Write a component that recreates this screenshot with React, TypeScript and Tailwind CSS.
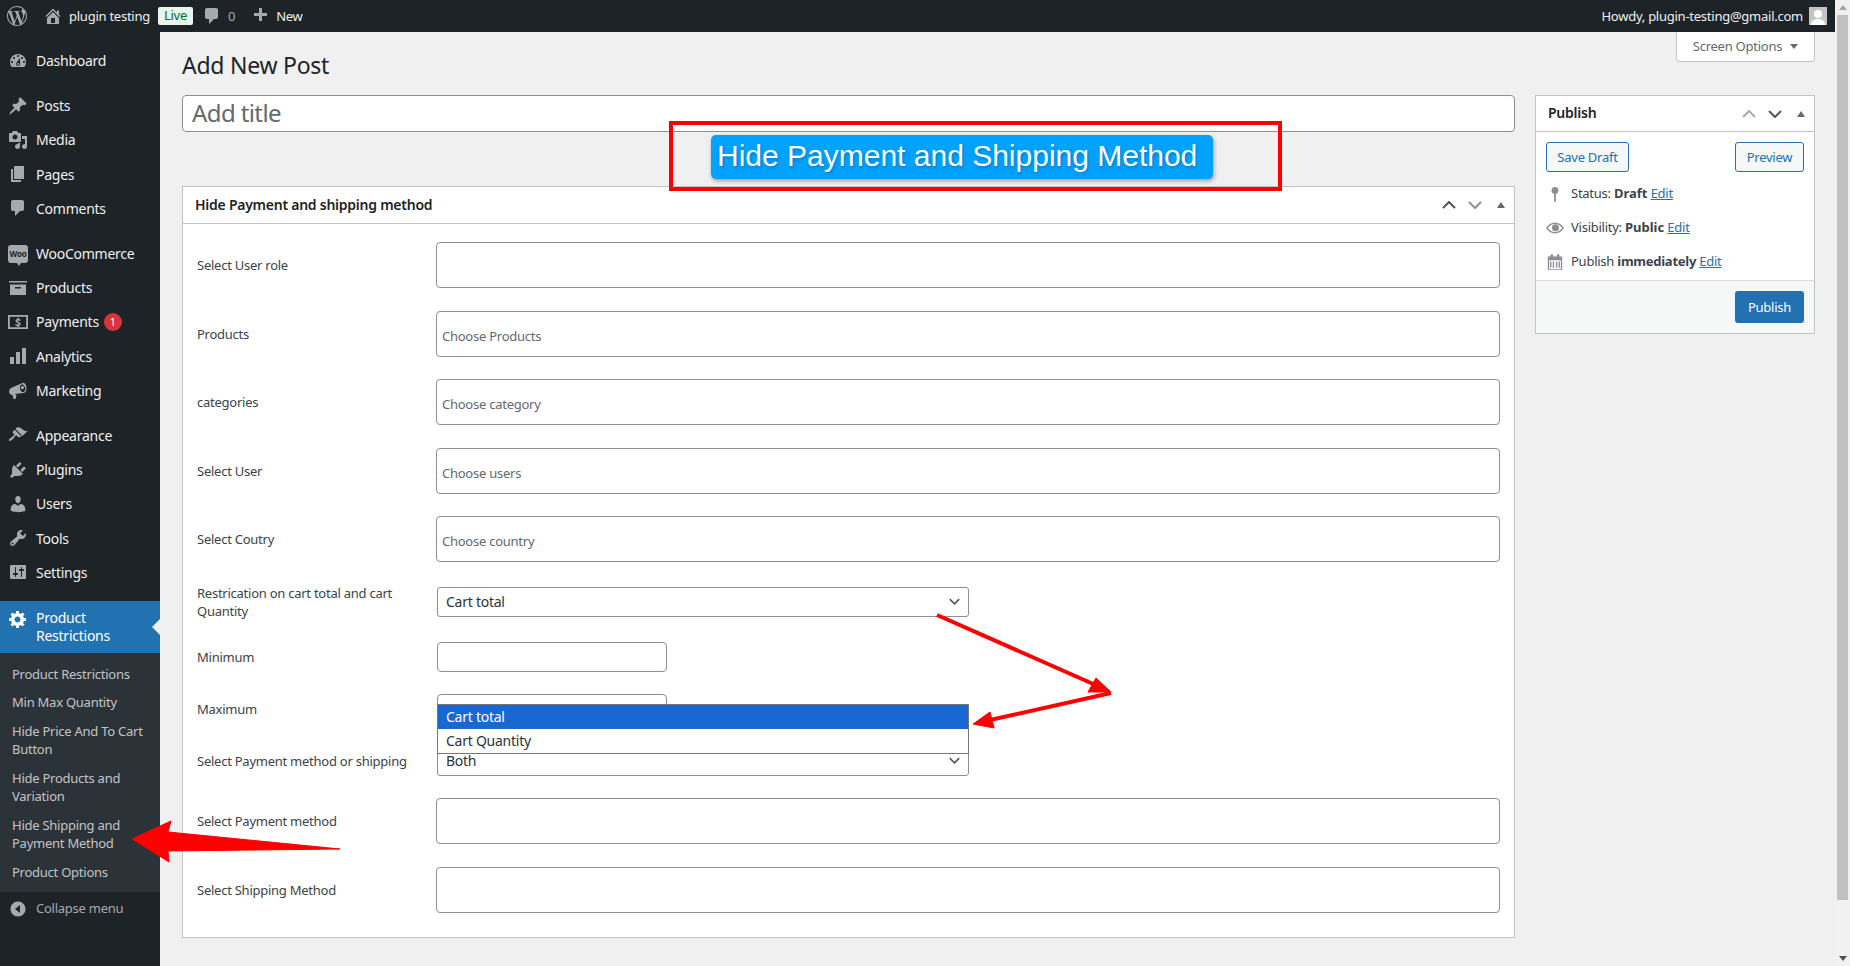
import { ReactNode } from 'react';
import { SiWordpress } from 'react-icons/si';

const FONT = "font-['Noto_Sans',sans-serif]";

const ICONS: Record<string, string> = {
  dashboard:
    'M3.76 16h12.48c1.1-1.37 1.76-3.11 1.76-5 0-4.42-3.58-8-8-8s-8 3.58-8 8c0 1.89.66 3.63 1.76 5zM10 4c.55 0 1 .45 1 1s-.45 1-1 1-1-.45-1-1 .45-1 1-1zM6 6c.55 0 1 .45 1 1s-.45 1-1 1-1-.45-1-1 .45-1 1-1zm8 0c.55 0 1 .45 1 1s-.45 1-1 1-1-.45-1-1 .45-1 1-1zm-5.37 5.55L12 7v6c0 1.1-.9 2-2 2s-2-.9-2-2c0-.57.24-1.08.63-1.45zM4 10c.55 0 1 .45 1 1s-.45 1-1 1-1-.45-1-1 .45-1 1-1zm12 0c.55 0 1 .45 1 1s-.45 1-1 1-1-.45-1-1 .45-1 1-1zm-5 3c0-.55-.45-1-1-1s-1 .45-1 1 .45 1 1 1 1-.45 1-1z',
  post: 'M10.44 3.02l1.82-1.82 6.36 6.35-1.83 1.82c-1.05-.68-2.48-.57-3.41.36l-.75.75c-.92.93-1.04 2.35-.35 3.41l-1.83 1.82-2.41-2.41-2.8 2.79c-.42.42-3.38 2.71-3.8 2.29s1.86-3.39 2.28-3.81l2.79-2.79L4.1 9.36l1.83-1.82c1.05.69 2.48.57 3.4-.36l.75-.75c.93-.92 1.05-2.35.36-3.41z',
  media:
    'M13 11V4c0-.55-.45-1-1-1h-1.67L9 1H5L3.67 3H2c-.55 0-1 .45-1 1v7c0 .55.45 1 1 1h10c.55 0 1-.45 1-1zM7 4.5c1.38 0 2.5 1.12 2.5 2.5S8.38 9.5 7 9.5 4.5 8.38 4.5 7 5.62 4.5 7 4.5zM14 6h5v10.5c0 1.38-1.12 2.5-2.5 2.5S14 17.88 14 16.5s1.12-2.5 2.5-2.5c.17 0 .34.02.5.05V9h-3V6zm-4 8.05V13h2v3.5c0 1.38-1.12 2.5-2.5 2.5S7 17.88 7 16.5 8.12 14 9.5 14c.17 0 .34.02.5.05z',
  page: 'M6 15V2h10v13H6zm-1 1h8v2H3V5h2v11z',
  comment:
    'M5 2h9c1.1 0 2 .9 2 2v7c0 1.1-.9 2-2 2h-2l-5 5v-5H5c-1.1 0-2-.9-2-2V4c0-1.1.9-2 2-2z',
  archive: 'M19 3v1.500H1V3h18zM2 6.500h16V17H2V6.500zM7 9v1.500h6V9H7z',
  analytics: 'M2 11h4v7H2zM8 6h4v12H8zM14 2h4v16h-4z',
  megaphone:
    'M18.15 5.94c.46 1.62.38 3.22-.02 4.48-.42 1.28-1.26 2.18-2.3 2.48-.16.06-.26.06-.4.06L7 14l1.5 1.5-1 3.5h-2l-1-4c-2.3 0-3.4-1.6-3.4-3.5 0-2.4 1.3-3.4 3.4-4.3L14.5 3c.2-.1.35-.14.6-.14 1.1-.04 2.5 1.1 3.05 3.08zM15.5 12c1.4-.4 2.1-2.4 1.6-4.4-.5-2-2-3.5-3.4-3.1-1.4.4-2.1 2.4-1.6 4.4.5 2 2 3.5 3.4 3.1zm-.7-2.8a1.6 1.6 0 1 0-.8-3.1 1.6 1.6 0 0 0 .8 3.1z',
  appearance:
    'M14.48 11.06L7.41 3.99l1.5-1.5c.5-.56 2.3-.47 3.51.32 1.21.8 1.43 1.28 2.91 2.1 1.18.64 2.45 1.26 4.45.85zm-.71.71L6.7 4.7 4.93 6.47c-.39.39-.39 1.02 0 1.41l1.06 1.06c.39.39.39 1.03 0 1.42-.6.6-1.43 1.11-2.21 1.69-.35.26-.7.53-1.01.84C1.43 13.23.4 14.96 1.15 15.71c.75.75 2.48-.28 3.82-1.62.31-.31.58-.66.84-1.01.58-.78 1.09-1.61 1.69-2.21.39-.39 1.02-.39 1.41 0l1.06 1.06c.39.39 1.02.39 1.41 0z',
  plugins:
    'M13.11 4.36L9.87 7.6 8 5.73l3.24-3.24c.35-.34 1.05-.2 1.56.32.52.51.66 1.21.31 1.55zm-8 1.77l.91-1.12 9.01 9.01-1.19.84c-.71.71-2.63 1.16-3.82 1.16H6.14L4.9 17.26c-.59.59-1.54.59-2.12 0-.59-.58-.59-1.53 0-2.12l1.24-1.24v-3.88c0-1.13.4-3.19 1.09-3.89zm7.26 3.97l3.24-3.24c.34-.35 1.04-.21 1.55.31.52.51.66 1.21.31 1.55l-3.24 3.25z',
  users:
    'M10 9.25c-2.27 0-2.73-3.44-2.73-3.44C7 4.02 7.82 2 9.97 2c2.16 0 2.98 2.02 2.71 3.81 0 0-.41 3.44-2.68 3.44zm0 2.57L12.72 10c2.39 0 4.52 2.33 4.52 4.53v2.49s-3.65 1.13-7.24 1.13c-3.65 0-7.24-1.13-7.24-1.13v-2.49c0-2.25 1.94-4.48 4.47-4.48z',
  tools:
    'M16.68 9.77c-1.34 1.34-3.3 1.67-4.95.99l-5.41 6.52c-.99.99-2.59.99-3.58 0s-.99-2.59 0-3.57l6.52-5.42c-.68-1.65-.35-3.61.99-4.95 1.28-1.28 3.12-1.62 4.72-1.06l-2.89 2.89 2.82 2.82 2.86-2.87c.53 1.58.18 3.39-1.08 4.65zM3.81 16.21c.4.39 1.04.39 1.43 0 .4-.4.4-1.04 0-1.43-.39-.4-1.03-.4-1.43 0-.39.39-.39 1.03 0 1.43z',
  settings:
    'M18 16V4c0-.55-.45-1-1-1H3c-.55 0-1 .45-1 1v12c0 .55.45 1 1 1h14c.55 0 1-.45 1-1zM8 11h1c.55 0 1 .45 1 1s-.45 1-1 1H8v1.5c0 .28-.22.5-.5.5s-.5-.22-.5-.5V13H6c-.55 0-1-.45-1-1s.45-1 1-1h1V5.5c0-.28.22-.5.5-.5s.5.22.5.5V11zm5-2h-1c-.55 0-1-.45-1-1s.45-1 1-1h1V5.5c0-.28.22-.5.5-.5s.5.22.5.5V7h1c.55 0 1 .45 1 1s-.45 1-1 1h-1v5.5c0 .28-.22.5-.5.5s-.5-.22-.5-.5V9z',
  gear: 'M18 12h-2.18c-.17.7-.44 1.35-.81 1.93l1.54 1.54-2.1 2.1-1.54-1.54c-.58.36-1.23.63-1.91.79V19H8v-2.18c-.68-.16-1.33-.43-1.91-.79l-1.54 1.54-2.12-2.12 1.54-1.54c-.36-.58-.63-1.23-.79-1.91H1V9.03h2.17c.16-.7.44-1.35.8-1.94L2.43 5.55l2.1-2.1 1.54 1.54c.58-.37 1.24-.64 1.93-.81V2h3v2.18c.68.16 1.33.43 1.91.79l1.54-1.54 2.12 2.12-1.54 1.54c.36.59.64 1.24.8 1.94H18V12zm-8.5 1.5c1.66 0 3-1.34 3-3s-1.34-3-3-3-3 1.34-3 3 1.34 3 3 3z',
  collapse:
    'M10 2.5c-4.14 0-7.5 3.36-7.5 7.5s3.36 7.5 7.5 7.5 7.5-3.36 7.5-7.5-3.36-7.5-7.5-7.5zM12 14l-5-4 5-4z',
  home: 'M16 8.5l1.53 1.53-1.06 1.06L10 4.62l-6.47 6.47-1.06-1.06L10 2.5l4 4v-2h2v4zm-6-2.46l6 5.99V18H4v-5.97zM12 17v-5H8v5h4z',
  plus: 'M17 7v3h-5v5H9v-5H4V7h5V2h3v5h5z',
  payments:
    'M0 3h20v14H0V3zm1.800 1.800v10.400h16.400V4.800H1.800zM10.800 5.800v1.100c.9.1 1.500.4 2 .8l-.8 1.400c-.6-.4-1.200-.7-1.900-.7-.6 0-.9.2-.9.5 0 .4.4.5 1.200.8 1.500.5 2.200 1.100 2.200 2.200 0 1-.7 1.700-1.800 2v1.100H9.300v-1c-.9-.1-1.800-.5-2.300-.9l.8-1.400c.6.500 1.400.8 2.100.8.600 0 1-.2 1-.6s-.4-.6-1.300-.9c-1.300-.5-2.100-1-2.100-2.200 0-1 .7-1.700 1.800-1.900V5.800h1.500z',
};

const Dashicon = ({ name, className }: { name: string; className: string }) => (
  <svg viewBox="0 0 20 20" fill="currentColor" fillRule="evenodd" className={className}>
    <path d={ICONS[name]} />
  </svg>
);

/* woo icon is a small speech bubble with the word in it */
const WooIcon = () => (
  <span className="relative flex h-[18px] w-5 items-center justify-center rounded-[3px] bg-[#a7aaad]">
    <span className="text-[8px] leading-none font-bold text-[#1d2327]">Woo</span>
    <span className="absolute -bottom-[3px] left-[9px] h-0 w-0 border-x-[2px] border-t-[3px] border-x-transparent border-t-[#a7aaad]" />
  </span>
);

const MENU = [
  [{ icon: 'dashboard', label: 'Dashboard' }],
  [
    { icon: 'post', label: 'Posts' },
    { icon: 'media', label: 'Media' },
    { icon: 'page', label: 'Pages' },
    { icon: 'comment', label: 'Comments' },
  ],
  [
    { icon: 'woo', label: 'WooCommerce' },
    { icon: 'archive', label: 'Products' },
    { icon: 'payments', label: 'Payments', badge: '1' },
    { icon: 'analytics', label: 'Analytics' },
    { icon: 'megaphone', label: 'Marketing' },
  ],
  [
    { icon: 'appearance', label: 'Appearance' },
    { icon: 'plugins', label: 'Plugins' },
    { icon: 'users', label: 'Users' },
    { icon: 'tools', label: 'Tools' },
    { icon: 'settings', label: 'Settings' },
  ],
];

const SUBMENU = [
  'Product Restrictions',
  'Min Max Quantity',
  'Hide Price And To Cart Button',
  'Hide Products and Variation',
  'Hide Shipping and Payment Method',
  'Product Options',
];

const Sidebar = () => (
  <aside className="flex w-[160px] shrink-0 flex-col bg-[#1d2327] pt-3 text-[14px] text-[#f0f0f1]">
    {MENU.map((group, i) => (
      <div key={i} className="mb-[11px]">
        {group.map((item) => (
          <div key={item.label} className="flex h-[34.2px] items-center pb-px">
            <span className="flex w-[36px] justify-center text-[#a7aaad]">
              {item.icon === 'woo' ? (
                <WooIcon />
              ) : (
                <Dashicon name={item.icon} className="h-5 w-5" />
              )}
            </span>
            <span>{item.label}</span>
            {item.badge && (
              <span className="ml-[5px] flex h-[18px] w-[18px] items-center justify-center rounded-full bg-[#d63638] text-[11px] text-white">
                {item.badge}
              </span>
            )}
          </div>
        ))}
      </div>
    ))}
    <div className="relative flex h-[52px] items-start bg-[#2271b1] pt-2 text-white">
      <span className="flex w-[36px] justify-center">
        <Dashicon name="gear" className="h-5 w-5" />
      </span>
      <span className="w-[100px] leading-[18px]">Product Restrictions</span>
      <span className="absolute right-0 top-[18px] h-0 w-0 border-y-[8px] border-r-[8px] border-y-transparent border-r-[#f0f0f1]" />
    </div>
    <div className="flex h-[239px] flex-col gap-[10px] bg-[#2c3338] pl-3 pr-1 pt-3 text-[13px] leading-[18.5px] text-[#c3c4c7]">
      {SUBMENU.map((s) => (
        <div key={s}>{s}</div>
      ))}
    </div>
    <div className="flex h-[34px] items-center text-[13px] text-[#a7aaad]">
      <span className="flex w-[36px] justify-center">
        <Dashicon name="collapse" className="h-5 w-5" />
      </span>
      Collapse menu
    </div>
  </aside>
);

const TopBar = () => (
  <header className="flex h-8 shrink-0 items-center bg-[#1d2327] text-[13px] text-[#f0f0f1]">
    <SiWordpress className="ml-[7px] h-5 w-5 text-[#a7aaad]" />
    <Dashicon name="home" className="ml-[16px] h-5 w-5 text-[#a7aaad]" />
    <span className="ml-[6px] pt-px">plugin testing</span>
    <span className="ml-2 flex h-[18px] w-[35px] items-center justify-center rounded-[2px] bg-[#e7f5ea] text-[#006b2e]">
      Live
    </span>
    <Dashicon name="comment" className="ml-[9px] h-5 w-5 text-[#a7aaad]" />
    <span className="ml-[6px] pt-px text-[#a7aaad]">0</span>
    <Dashicon name="plus" className="ml-[15px] h-5 w-5 text-[#a7aaad]" />
    <span className="ml-[6px] pt-px">New</span>
    <span className="ml-auto pt-px">Howdy, plugin-testing@gmail.com</span>
    <span className="ml-[6px] mr-2 flex h-[18px] w-[18px] items-end justify-center overflow-hidden bg-[#c3c4c7]">
      <svg viewBox="0 0 18 18" className="h-[18px] w-[18px]" fill="#fff">
        <circle cx="9" cy="7" r="4" />
        <path d="M2 18c0-4 3-6 7-6s7 2 7 6z" />
      </svg>
    </span>
  </header>
);

const Chevron = ({ up, className }: { up?: boolean; className: string }) => (
  <svg viewBox="0 0 14 8" fill="none" stroke="currentColor" strokeWidth="2" className={className}>
    <path d={up ? 'M1 7l6-6 6 6' : 'M1 1l6 6 6-6'} />
  </svg>
);

const BoxControls = ({ upClass, downClass }: { upClass: string; downClass: string }) => (
  <div className="flex items-center">
    <Chevron up className={`h-2 w-[14px] ${upClass}`} />
    <Chevron className={`ml-3 h-2 w-[14px] ${downClass}`} />
    <span className="ml-[15px] h-0 w-0 border-x-[4px] border-b-[6px] border-x-transparent border-b-[#646970]" />
  </div>
);

const Row = ({
  label,
  className,
  children,
}: {
  label: string;
  className: string;
  children: ReactNode;
}) => (
  <div className={`flex items-center ${className}`}>
    <div className="w-[239px] shrink-0 pr-5 leading-[18px]">{label}</div>
    <div className="relative flex-1">{children}</div>
  </div>
);

const Field = ({ placeholder }: { placeholder?: string }) => (
  <div className="flex h-full min-h-[46px] items-center rounded-[4px] border border-[#8c8f94] bg-white px-[5px] pt-[6px] text-[#646970]">
    {placeholder}
  </div>
);

const SelectBox = ({ value }: { value: string }) => (
  <div className="flex h-[30px] w-[532px] items-center justify-between rounded-[3px] border border-[#8c8f94] bg-white pb-px pl-2 pr-2 text-[14px] text-[#2c3338]">
    {value}
    <Chevron className="h-[7px] w-[11px] text-[#50575e]" />
  </div>
);

const SmallInput = () => (
  <div className="h-[30px] w-[230px] rounded-[4px] border border-[#8c8f94] bg-white" />
);

const MetaBox = () => (
  <section className="mt-[54px] h-[752px] border border-[#c3c4c7] bg-white text-[13px] text-[#3c434a]">
    <div className="flex h-[37px] items-center justify-between border-b border-[#c3c4c7] pl-3 pr-[9px]">
      <h2 className="pb-[2px] text-[14px] font-semibold text-[#1d2327]">
        Hide Payment and shipping method
      </h2>
      <BoxControls upClass="text-[#50575e]" downClass="text-[#8c8f94]" />
    </div>
    <div className="pl-[14px] pr-[14px] pt-[18px]">
      <Row label="Select User role" className="h-[46px]">
        <Field />
      </Row>
      <Row label="Products" className="mt-[23px] h-[46px]">
        <Field placeholder="Choose Products" />
      </Row>
      <Row label="categories" className="mt-[21px] h-[47px]">
        <Field placeholder="Choose category" />
      </Row>
      <Row label="Select User" className="mt-[23px] h-[46px]">
        <Field placeholder="Choose users" />
      </Row>
      <Row label="Select Coutry" className="mt-[22px] h-[46px]">
        <Field placeholder="Choose country" />
      </Row>
      <Row label="Restrication on cart total and cart Quantity" className="mt-[25px] h-[30px]">
        <div className="ml-px">
          <SelectBox value="Cart total" />
        </div>
      </Row>
      <Row label="Minimum" className="mt-[25px] h-[30px]">
        <div className="ml-px">
          <SmallInput />
        </div>
      </Row>
      <Row label="Maximum" className="mt-[22px] h-[30px]">
        <div className="ml-px">
          <SmallInput />
        </div>
        {/* open dropdown of the select above */}
        <div className="absolute left-px top-[10px] z-10 w-[532px] border border-[#767676] bg-white text-[14px] text-[#2c3338]">
          <div className="flex h-6 items-center bg-[#1967d2] pb-[2px] pl-2 text-white">Cart total</div>
          <div className="flex h-6 items-center pb-[2px] pl-2">Cart Quantity</div>
        </div>
      </Row>
      <Row label="Select Payment method or shipping" className="mt-[22px] h-[30px]">
        <div className="ml-px">
          <SelectBox value="Both" />
        </div>
      </Row>
      <Row label="Select Payment method" className="mt-[22px] h-[46px]">
        <Field />
      </Row>
      <Row label="Select Shipping Method" className="mt-[23px] h-[46px]">
        <Field />
      </Row>
    </div>
  </section>
);

const PublishBox = () => (
  <aside className="h-[239px] w-[280px] shrink-0 border border-[#c3c4c7] bg-white text-[13px] text-[#3c434a]">
    <div className="flex h-[36px] items-center justify-between border-b border-[#c3c4c7] pl-3 pr-[9px]">
      <h2 className="pb-[2px] text-[14px] font-semibold text-[#1d2327]">Publish</h2>
      <BoxControls upClass="text-[#a7aaad]" downClass="text-[#50575e]" />
    </div>
    <div className="flex justify-between px-[10px] pt-[10px]">
      <button className="h-[30px] w-[83px] rounded-[3px] border border-[#2271b1] bg-[#f6f7f7] pt-px text-[#2271b1]">
        Save Draft
      </button>
      <button className="h-[30px] w-[69px] rounded-[3px] border border-[#2271b1] bg-[#f6f7f7] pt-px text-[#2271b1]">
        Preview
      </button>
    </div>
    <div className="mt-[5px] flex h-[34px] items-center pl-[10px]">
      <svg viewBox="0 0 20 20" fill="#8c8f94" className="mr-[7px] h-[18px] w-[18px]">
        <circle cx="10" cy="6" r="3.800" />
        <rect x="9" y="8" width="2" height="11" rx="1" />
      </svg>
      Status:&nbsp;<b className="tracking-normal">Draft</b>&nbsp;<a className="text-[#2271b1] underline">Edit</a>
    </div>
    <div className="flex h-[34px] items-center pl-[10px]">
      <svg viewBox="0 0 20 20" fill="#8c8f94" className="mr-[7px] h-[18px] w-[18px]">
        <path d="M10 4c-4.200 0-7.800 2.400-10 6 2.200 3.600 5.800 6 10 6s7.800-2.400 10-6c-2.200-3.600-5.800-6-10-6zm0 1.500c3.300 0 6.100 1.800 7.900 4.500-1.800 2.700-4.600 4.500-7.900 4.500S3.900 12.700 2.100 10C3.900 7.300 6.700 5.500 10 5.500z" fillRule="evenodd" />
        <circle cx="10.500" cy="9.800" r="3.900" />
      </svg>
      Visibility:&nbsp;<b className="tracking-normal">Public</b>&nbsp;<a className="text-[#2271b1] underline">Edit</a>
    </div>
    <div className="flex h-[34px] items-center pl-[10px]">
      <svg viewBox="0 0 20 20" fill="#8c8f94" className="mr-[7px] h-[18px] w-[18px]">
        <path d="M15 4h3v15H2V4h3V3c0-.41.15-.76.44-1.060C5.730 1.650 6.080 1.500 6.500 1.500s.77.150 1.060.44c.29.300.44.650.44 1.060v1h4V3c0-.41.150-.76.440-1.060.29-.29.640-.44 1.060-.44s.77.150 1.060.44c.29.300.44.650.44 1.060v1zM3.500 18h13V8h-13v10zM6 9.500v7H4.500v-7H6zm3 0v7H7.500v-7H9zm3.500 0v7H11v-7h1.500zm3 0v7H14v-7h1.500z" fillRule="evenodd" />
      </svg>
      Publish&nbsp;<b>immediately</b>&nbsp;<a className="text-[#2271b1] underline">Edit</a>
    </div>
    <div className="mt-[1px] flex h-[53px] items-center justify-end border-t border-[#dcdcde] bg-[#f6f7f7] px-[10px]">
      <button className="h-[32px] w-[69px] rounded-[3px] bg-[#2271b1] pt-px text-white">Publish</button>
    </div>
  </aside>
);

const Scrollbar = () => (
  <div className="flex w-[15px] shrink-0 flex-col items-center bg-[#f1f1f1]">
    <span className="mt-[5px] h-0 w-0 border-x-[4px] border-b-[5px] border-x-transparent border-b-[#a3a3a3]" />
    <div className="mt-[5px] h-[885px] w-[11px] bg-[#c1c1c1]" />
    <span className="mt-auto mb-[5px] h-0 w-0 border-x-[4px] border-t-[5px] border-x-transparent border-t-[#505050]" />
  </div>
);

export default function App() {
  return (
    <div className={`relative flex h-[966px] w-[1850px] overflow-hidden bg-[#f0f0f1] tracking-[-0.25px] ${FONT}`}>
      <div className="flex w-[1835px] flex-col">
        <TopBar />
        <div className="flex min-h-0 flex-1">
          <Sidebar />
          <main className="flex-1 pl-[22px] pr-5">
            <div className="flex h-[63px] items-start justify-between">
              <h1 className="pt-[19px] text-[23px] leading-[29px] text-[#1d2327]">Add New Post</h1>
              <div className="flex h-[30px] w-[139px] items-center justify-center gap-2 rounded-b-[4px] border border-t-0 border-[#c3c4c7] bg-white text-[13px] text-[#646970]">
                Screen Options
                <span className="h-0 w-0 border-x-[4px] border-t-[5px] border-x-transparent border-t-[#646970]" />
              </div>
            </div>
            <div className="flex items-start justify-between">
              <div className="w-[1333px]">
                <div className="flex h-[37px] items-center rounded-[4px] border border-[#8c8f94] bg-white pb-[2px] pl-[9px] text-[24px] tracking-[-0.6px] text-[#646970]">
                  Add title
                </div>
                <MetaBox />
              </div>
              <PublishBox />
            </div>
          </main>
        </div>
      </div>
      <Scrollbar />

      {/* annotations drawn over the screenshot */}
      <div className="absolute left-[669px] top-[121px] h-[70px] w-[613px] border-[4px] border-[#ff0000]" />
      <div className="absolute left-[711px] top-[135px] flex h-[44px] w-[502px] items-center whitespace-nowrap rounded-[5px] bg-[#00a2ff] pb-[3px] pl-[6px] font-['Liberation_Sans',sans-serif] text-[30px] tracking-normal text-white shadow-[1px_2px_4px_rgba(0,0,0,0.35)] [text-shadow:1px_2px_3px_rgba(0,60,120,0.35)]">
        Hide Payment and Shipping Method
      </div>
      <svg className="pointer-events-none absolute left-0 top-0 z-20 h-[966px] w-[1850px]" viewBox="0 0 1850 966">
        <g fill="#ff0000" stroke="#ff0000" strokeLinejoin="round">
          <path d="M132 839 171 821 168 832 340 849 168 851 169 862Z" strokeWidth="1" />
          <path d="M937 615 1100 687" strokeWidth="4" fill="none" />
          <path d="M1111 692 1088 692 1096 678Z" strokeWidth="1" />
          <path d="M1111 693 990 720" strokeWidth="4" fill="none" />
          <path d="M973 724 990 712 994 728Z" strokeWidth="1" />
        </g>
      </svg>
    </div>
  );
}
